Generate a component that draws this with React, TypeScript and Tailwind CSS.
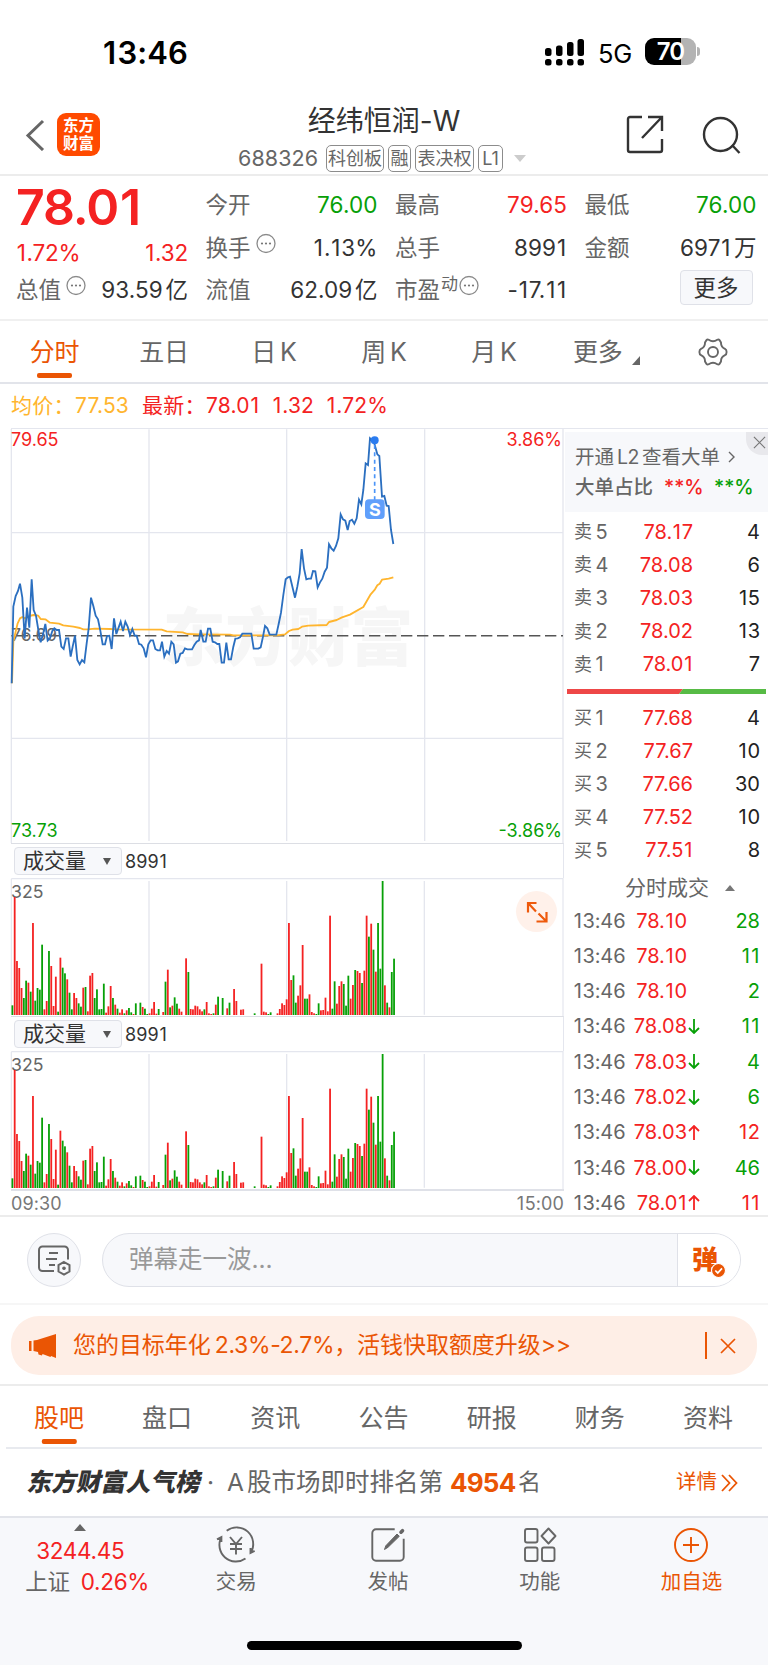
import type { ReactNode } from "react";

const RED = "#f42222";
const GREEN = "#07a007";

/* Minute bars: direction and top edge on a 122–523 scale; "-" is a minute without trades. */
const VOLUME =
  "g495 r170 r362 r383 r443 g473 g421 r427 g454 r248 g481 g443 g448 g313 r507 r482 g332 r377 r497 r409 g514 r352 g382 g399 r417 g457 g507 r458 r473 g489 g499 r442 g440 r513 r406 r398 g473 g447 g507 g506 g430 r517 r498 r437 g473 r493 g505 r517 r507 g519 r510 g503 g516 r521 g489 - g487 r500 g505 g521 r519 r505 r485 r520 g506 - r515 g424 r388 g501 r496 g471 g490 r505 r514 - r354 g395 r506 r507 r496 r498 r507 r513 g507 r485 r519 r521 g519 r493 g469 - g473 - r504 g487 - r446 r482 - r508 r507 - - - - g519 - - r370 r514 r516 g521 g516 - - r519 r506 r489 r494 r477 r248 r419 g405 g487 r466 r435 r314 g475 g475 r462 r515 r519 g521 g489 r510 r509 r472 r513 r226 g505 g423 r490 r437 r423 g431 g496 g406 r475 r434 g389 r392 r398 g428 r391 r226 g289 r250 g328 r394 g248 g385 g122 r435 g487 r501 g395 g355".split(
    " ",
  );

const PRICE =
  "35,775 40,545 47,513 54,498 60,476 67,518 74,640 81,548 88,608 95,463 101,555 108,572 115,615 122,652 129,628 136,597 143,647 150,640 157,618 163,610 170,615 177,615 184,665 191,672 198,640 205,640 212,695 218,665 225,632 232,705 239,718 246,705 253,712 260,655 266,610 273,518 280,543 287,572 294,583 301,617 308,658 315,658 321,633 328,632 335,672 342,580 349,627 356,607 362,590 369,618 376,590 383,605 390,630 397,612 404,632 410,632 417,657 424,659 431,670 438,697 445,658 452,646 459,646 466,672 473,676 480,676 486,650 493,695 500,678 507,686 514,650 521,658 528,713 534,709 541,686 548,684 555,670 562,673 576,673 583,660 590,650 597,646 602,615 610,650 617,650 624,611 631,611 638,650 645,652 652,657 658,657 665,713 672,713 679,653 686,703 693,703 700,665 706,641 713,640 720,637 727,626 754,626 761,671 775,671 782,667 789,635 795,603 802,610 809,629 829,629 836,597 843,563 850,510 857,463 864,457 870,455 885,518 892,485 899,445 905,372 912,430 919,463 926,461 933,461 939,438 946,439 953,487 960,472 967,461 974,440 981,428 987,358 994,370 1001,377 1008,363 1015,340 1022,268 1029,283 1036,287 1043,315 1049,288 1056,284 1063,296 1070,280 1077,224 1084,238 1090,195 1097,115 1104,120 1110,40 1122,52 1132,88 1138,93 1146,215 1153,213 1160,242 1166,243 1173,315 1180,357";

const AVERAGE =
  "36,775 40,650 47,620 53,595 60,580 67,576 74,580 88,573 101,570 115,572 122,582 136,583 150,593 177,596 190,601 220,605 240,609 250,613 262,613 285,611 330,612 350,613 485,614 500,619 548,622 562,627 600,628 690,629 700,631 830,631 855,628 867,618 878,614 895,612 906,605 925,602 980,600 987,591 1010,585 1026,577 1050,569 1090,546 1112,508 1125,493 1132,481 1139,476 1146,464 1166,461 1180,457";

/* A number whose narrow 1s get a little extra room. */
function Num({ children }: { children: string }) {
  return (
    <span>
      {children.split(/(1)/).map((part, i) => (part === "1" ? <span key={i} className="px-[0.035em]">1</span> : part))}
    </span>
  );
}

function More() {
  return (
    <svg viewBox="0 0 20 20" className="size-[20px] -translate-y-[4.5px]" fill="none" stroke="#8a8a8a">
      <circle cx="10" cy="10" r="9" strokeWidth="1.3" />
      <g fill="#777" stroke="none">
        <circle cx="6" cy="10" r="1.1" />
        <circle cx="10" cy="10" r="1.1" />
        <circle cx="14" cy="10" r="1.1" />
      </g>
    </svg>
  );
}

function Quote({ label, value, unit, tone = "text-[#333]" }: { label: ReactNode; value: string; unit?: string; tone?: string }) {
  return (
    <div className="flex h-[42.5px] items-center justify-between">
      <span className="flex items-center text-[#666]">{label}</span>
      <span className={tone + " tracking-[0.1px]"}>
        <Num>{value}</Num>
        {unit && <span className="ml-[2.5px]">{unit}</span>}
      </span>
    </div>
  );
}

function StatusBar() {
  return (
    <div className="flex h-[95px] items-start pt-[33px] pl-[102px] text-black">
      <div className="w-[443px] text-[31px] leading-[40px] font-semibold tracking-[0.1px]"><Num>13:46</Num></div>
      <svg viewBox="0 0 40 27" className="mt-[5.5px] h-[27px] w-[40px]">
        <rect x="0" y="9" width="6.500" height="8" rx="2.5" />
        <rect x="11" y="6.500" width="6.500" height="10.500" rx="2.5" />
        <rect x="22" y="3" width="6.500" height="14" rx="2.5" />
        <rect x="32.5" y="0" width="6.500" height="17" rx="2.5" />
        <rect x="0" y="20" width="6.500" height="6.5" rx="2.5" />
        <rect x="11" y="20" width="6.500" height="6.5" rx="2.5" />
        <rect x="22" y="20" width="6.500" height="6.5" rx="2.5" />
        <rect x="32.5" y="20" width="6.500" height="6.5" rx="2.5" />
      </svg>
      <div className="ml-[13px] w-[47px] text-[25.500px] leading-[41px] tracking-[-0.2px]">5G</div>
      <div className="mt-[5px] flex h-[27px] w-[51px] items-center justify-center rounded-[9px] bg-[linear-gradient(90deg,#000_0_36px,#b3b3b3_36px)] text-[24px] font-semibold tracking-[-0.8px] text-white">
        70
      </div>
      <div className="mt-[14px] ml-[1px] h-[9px] w-[3px] rounded-r-full bg-[#b3b3b3]" />
    </div>
  );
}

function Tag({ children, w }: { children: ReactNode; w: string }) {
  return (
    <span className={w + " flex h-[27px] items-center justify-center rounded-[5px] border-[1.5px] border-[#8c8c8c] text-[18px] whitespace-nowrap text-[#666]"}>
      {children}
    </span>
  );
}

function Header() {
  return (
    <div className="flex h-[81px] border-b-2 border-[#ececec]">
      <div className="flex w-[226px] pt-[18px] pl-[25px]">
        <svg viewBox="0 0 20 32" className="mt-[6px] h-[32px] w-[20px]" fill="none" stroke="#666" strokeWidth="3">
          <path d="M18 2 3 16.5 18 31" />
        </svg>
        <div className="ml-[12px] flex size-[43px] flex-col items-center justify-center rounded-[9px] bg-[#ff4a00] text-[15.500px] leading-[18px] font-bold text-white">
          <span>东方</span>
          <span>财富</span>
        </div>
      </div>
      <div className="w-[316px] text-center">
        <div className="h-[49px] pt-[5px] text-[28px] leading-[42px] text-[#333]">经纬恒润-W</div>
        <div className="flex items-center pt-[0.500px] pl-[12px]">
          <span className="w-[88px] text-left text-[21.5px] leading-[27px] tracking-[0.1px] text-[#666]">688326</span>
          <div className="flex gap-[4px]">
            <Tag w="w-[58px]">科创板</Tag>
            <Tag w="w-[23px]">融</Tag>
            <Tag w="w-[59px]">表决权</Tag>
            <Tag w="w-[25px]">L1</Tag>
          </div>
          <svg viewBox="0 0 12 7" className="ml-[11px] h-[7px] w-[12px]">
            <path d="M0 0h12L6 7z" fill="#ccc" />
          </svg>
        </div>
      </div>
      <svg viewBox="0 0 38 39" className="mt-[20px] ml-[84px] h-[39px] w-[38px]" fill="none" stroke="#333" strokeWidth="2.4">
        <path d="M16 2H4a2 2 0 0 0-2 2v31a2 2 0 0 0 2 2h30a2 2 0 0 0 2-2V24M22 2h14v14M36 2 16 23" />
      </svg>
      <svg viewBox="0 0 39 39" className="mt-[21px] ml-[38px] size-[39px]" fill="none" stroke="#333" strokeWidth="2.4">
        <circle cx="18.5" cy="18.5" r="16.5" />
        <path d="m30 29 7.5 8" />
      </svg>
    </div>
  );
}

function Quotes() {
  return (
    <div className="flex h-[145px] gap-[17.5px] border-b-2 border-[#f0f0f0] pt-[8px] pr-[12px] pl-[16px] text-[22.5px] whitespace-nowrap">
      <div className="w-[172px] shrink-0">
        <div className="h-[52px] text-[50px] leading-[47px] font-semibold tracking-[-1.1px] text-[#f42222]"><Num>78.01</Num></div>
        <div className="flex h-[33px] items-center justify-between pt-[1px] tracking-[-0.2px] text-[#f42222]">
          <Num>1.72%</Num>
          <Num>1.32</Num>
        </div>
        <Quote label={<>总值<i className="w-[5px]" /><More /></>} value="93.59" unit="亿" />
      </div>
      <div className="w-[172px] shrink-0">
        <Quote label="今开" value="76.00" tone="text-[#07a007]" />
        <Quote label={<>换手<i className="w-[5px]" /><More /></>} value="1.13%" />
        <Quote label="流值" value="62.09" unit="亿" />
      </div>
      <div className="w-[172px] shrink-0">
        <Quote label="最高" value="79.65" tone="text-[#f42222]" />
        <Quote label="总手" value="8991" />
        <Quote label={<>市盈<span className="-translate-y-[6px] pl-[1px] text-[17px]">动</span><i className="w-[1px]" /><More /></>} value="-17.11" />
      </div>
      <div className="w-[172px] shrink-0">
        <Quote label="最低" value="76.00" tone="text-[#07a007]" />
        <Quote label="金额" value="6971" unit="万" />
        <div className="flex justify-end pt-[1px] pr-[4px]">
          <div className="flex h-[35px] w-[73px] items-center justify-center rounded-[4px] border-[1.5px] border-[#dfe1e8] bg-[#f7f8fb] text-[#333]">更多</div>
        </div>
      </div>
    </div>
  );
}

function ChartTabs() {
  const tabs = ["五日", "日", "周", "月"];
  return (
    <div className="flex h-[63px] border-b-2 border-[#e2e4ea] text-[25px] leading-[62px] tracking-[-0.2px] text-[#666]">
      <div className="flex w-[109px] flex-col items-center text-[#ea5504]">
        <span className="h-[52px]">分时</span>
        <span className="h-[5px] w-[35px] rounded-[2px] bg-[#ea5504]" />
      </div>
      {tabs.map((t) => (
        <div key={t} className="w-[110px] text-center">
          {t}
          {t.length === 1 && <span className="ml-[4px]">K</span>}
        </div>
      ))}
      <div className="flex w-[109px] pl-[24px]">
        更多
        <svg viewBox="0 0 8 9" className="mt-[35px] ml-[9px] h-[9px] w-[8px]">
          <path d="M8 0v9H0z" fill="#666" />
        </svg>
      </div>
      <svg viewBox="0 0 30 28" className="mt-[17px] ml-[40px] h-[28px] w-[30px]" fill="none" stroke="#666" strokeWidth="1.9" strokeLinejoin="round">
        <path d="M8.4 2.2Q9.4 1 10.7 1.8C13.3 3.5 16.7 3.5 19.3 1.8Q20.6 1 21.6 2.2L23 4.6C22.9 7.5 24.4 9.6 27 10.8Q28.6 11.5 28.6 14T27 17.2C24.4 18.4 22.9 20.5 23 23.4L21.6 25.8Q20.6 27 19.3 26.2C16.7 24.5 13.3 24.5 10.7 26.2Q9.4 27 8.4 25.8L7 23.4C7.100 20.5 5.600 18.4 3 17.2Q1.400 16.5 1.400 14T3 10.800C5.600 9.600 7.100 7.500 7 4.600Z" />
        <circle cx="15" cy="14" r="5" />
      </svg>
    </div>
  );
}

function PriceChart() {
  return (
    <div className="relative h-[414px]">
      <svg viewBox="0 12 1692 1242" className="block h-[414px] w-[564px]" fill="none">
        <text x="488" y="704" fontSize="188" fontWeight="900" fill="#f6f6f6">东方财富</text>
        <g stroke="#e4e6ee" strokeWidth="4">
          <path d="M34 10V1254M34 323H1689M34 940H1689M447 13V1248M860 13V1248M1274 13V1248M1689 9V1254" />
        </g>
        <path d="M34 632H1689" stroke="#555" strokeWidth="4.500" strokeDasharray="34 14" strokeDashoffset="31" />
        <text x="34" y="648" fontSize="52" fill="#666">76.69</text>
        <polyline points={AVERAGE} stroke="#ffb52e" strokeWidth="5.500" strokeLinejoin="round" />
        <polyline points={PRICE} stroke="#2b6fc0" strokeWidth="5.500" />
        <path d="M1124 60V225" stroke="#4a94f8" strokeWidth="5" strokeDasharray="12 10" />
        <circle cx="1124" cy="46" r="12" fill="#2b7cf0" />
        <rect x="1095" y="223" width="59" height="59" rx="12" fill="#609ffb" />
        <text x="1124.500" y="272" fontSize="54" fontWeight="700" textAnchor="middle" fill="#fff">S</text>
      </svg>
      <div className="absolute inset-0 flex flex-col justify-between text-[18px] leading-[21px]">
        <div className="flex justify-between pr-[2px] pl-[11px] text-[#f42222]"><span>79.65</span><span>3.86%</span></div>
        <div className="flex justify-between pr-[2px] pb-[2px] pl-[11px] text-[#07a007]"><span>73.73</span><span>-3.86%</span></div>
      </div>
    </div>
  );
}

function VolumePane({ expand }: { expand?: boolean }) {
  return (
    <>
      <div className="ml-[11px] flex h-[35px] w-[553px] items-center border-t-[1.500px] border-r border-t-[#dcdee4] border-r-[#e4e6ee] pl-[3px] text-[#333]">
        <div className="flex h-[28px] w-[108px] items-center rounded-[4px] border-[1.5px] border-[#dfe1e8] bg-[#f7f8fb] pl-[8px] text-[21px]">
          成交量
          <svg viewBox="0 0 8 7" className="ml-[17px] h-[7px] w-[8px]"><path d="M0 0h8L4 7z" fill="#555" /></svg>
        </div>
        <span className="ml-[3px] text-[18px] tracking-[0.1px]"><Num>8991</Num></span>
      </div>
      <div className="relative h-[138px]">
        <svg viewBox="0 113 1692 414" className="block h-[138px] w-[564px]" fill="none">
          <path d="M34 115H1689M34 115V523M1689 113V527" stroke="#e4e6ee" strokeWidth="3.500" />
          <path d="M447 122V523M860 122V523M1273 122V523" stroke="#e4e6ee" strokeWidth="4" />
          <text x="33" y="174" fontSize="53" fill="#666">325</text>
          {VOLUME.map((v, i) => {
            if (v === "-") return null;
            const top = Number(v.slice(1));
            return <rect key={i} x={34.5 + i * 6.856} y={top} width="5.400" height={524 - top} fill={v[0] === "r" ? RED : GREEN} />;
          })}
        </svg>
        {expand && (
          <div className="absolute top-[13px] left-[516px] flex size-[41px] items-center justify-center rounded-full bg-[#fff1ea]">
            <svg viewBox="0 0 22 22" className="size-[22px]" fill="none" stroke="#ee5a0c" strokeWidth="2.200">
              <path d="M10.500 2H2v9.500M2 2l8 8.500M20.500 11v9.500h-10M20 20l-7.500-7.500" />
            </svg>
          </div>
        )}
      </div>
    </>
  );
}

const SELL = [["卖", "5", "78.17", "4"], ["卖", "4", "78.08", "6"], ["卖", "3", "78.03", "15"], ["卖", "2", "78.02", "13"], ["卖", "1", "78.01", "7"]];
const BUY = [["买", "1", "77.68", "4"], ["买", "2", "77.67", "10"], ["买", "3", "77.66", "30"], ["买", "4", "77.52", "10"], ["买", "5", "77.51", "8"]];
const TICKS = [["78.10", "", "28", "g"], ["78.10", "", "11", "g"], ["78.10", "", "2", "g"], ["78.08", "d", "11", "g"], ["78.03", "d", "4", "g"], ["78.02", "d", "6", "g"], ["78.03", "u", "12", "r"], ["78.00", "d", "46", "g"], ["78.01", "u", "11", "r"]];

function Depth({ rows }: { rows: string[][] }) {
  return (
    <div className="pr-[8px] pl-[10px]">
      {rows.map(([side, n, p, q]) => (
        <div key={n} className="flex h-[33.2px] items-center">
          <span className="w-[21.500px] text-[18px] text-[#666]">{side}</span>
          <span className="w-[28.500px] text-[#666]">{n}</span>
          <span className="w-[69px] text-right text-[#f42222]"><Num>{p}</Num></span>
          <span className="flex-1 text-right text-[#222]"><Num>{q}</Num></span>
        </div>
      ))}
    </div>
  );
}

function SidePanel() {
  return (
    <div className="relative w-[204px] pt-[4px] text-[20px] whitespace-nowrap">
      <div className="ml-[1px] h-[80px] bg-[#f7f8fb] pt-[10px] pl-[10px] text-[19.5px] leading-[30px] text-[#666]">
        <div className="flex items-center">
          开通<span className="px-[3px] tracking-[-0.5px]">L2</span>查看大单
          <svg viewBox="0 0 7 12" className="ml-[8px] h-[12px] w-[7px]" fill="none" stroke="#666" strokeWidth="1.400"><path d="m1 1 5 5-5 5" /></svg>
        </div>
        <div className="flex font-medium">
          <span className="w-[89px]">大单占比</span>
          <span className="w-[50px] text-[#f42222]">**%</span>
          <span className="text-[#07a007]">**%</span>
        </div>
      </div>
      <div className="absolute top-[4px] right-0 flex h-[23px] w-[22px] items-center justify-end rounded-bl-[16px] bg-[#e8e8ec] pr-[2px] pb-[3px]">
        <svg viewBox="0 0 14 14" className="size-[13px]" stroke="#777" strokeWidth="1.300"><path d="m1 1 12 12M13 1 1 13" /></svg>
      </div>
      <div className="pt-[3px]"><Depth rows={SELL} /></div>
      <svg viewBox="0 0 199 5" className="mt-[8px] ml-[3px] block h-[5px] w-[199px]">
        <path d="M0 0h116l-4 5H0z" fill="#ee4747" />
        <path d="M116 0h83v5h-87z" fill="#57bb45" />
      </svg>
      <div className="pt-[7px]"><Depth rows={BUY} /></div>
      <div className="flex h-[36px] items-center pt-[6px] pl-[61px] text-[21px] text-[#666]">
        分时成交
        <svg viewBox="0 0 10 6" className="ml-[16px] h-[6px] w-[10px]"><path d="M0 6h10L5 0z" fill="#777" /></svg>
      </div>
      <div className="pr-[8px] pl-[9px]">
        {TICKS.map(([p, d, q, c], i) => (
          <div key={i} className="flex h-[35.3px] items-center">
            <span className="w-[54px] tracking-[-0.100px] text-[#666]"><Num>13:46</Num></span>
            <span className="w-[60px] text-right text-[#f42222]"><Num>{p}</Num></span>
            <svg viewBox="0 0 12 15" className="ml-[1px] h-[15px] w-[12px]" fill="none" stroke={d === "u" ? RED : GREEN} strokeWidth="1.800">
              {d === "d" && <path d="M6 0v14M1 9l5 5 5-5" />}
              {d === "u" && <path d="M6 15V1M1 6l5-5 5 5" />}
            </svg>
            <span className={(c === "r" ? "text-[#f42222]" : "text-[#07a007]") + " flex-1 text-right"}><Num>{q}</Num></span>
          </div>
        ))}
      </div>
    </div>
  );
}

function Danmu() {
  return (
    <div className="flex h-[90px] border-t-2 border-b-2 border-t-[#ececec] border-b-[#f6f6f6] pt-[16px] pl-[27px]">
      <div className="flex size-[54px] items-center justify-center rounded-full border-[1.500px] border-[#dfe1e8] bg-[#f7f8fb]">
        <svg viewBox="0 0 34 31" className="h-[31px] w-[34px]" fill="none" stroke="#666" strokeWidth="2">
          <path d="M17 26H5.500A3.500 3.500 0 0 1 2 22.500V5a3.500 3.500 0 0 1 3.500-3.500h22A3.500 3.500 0 0 1 31 5v9.500M12 8h9M9 14h11M12 20h6" />
          <path d="m27 17 5.500 3.200v6.300L27 29.700l-5.500-3.200v-6.300z" />
          <circle cx="27" cy="23.300" r="1.300" fill="#666" stroke="none" />
          <circle cx="27" cy="23.300" r=".8" />
        </svg>
      </div>
      <div className="ml-[21px] flex h-[54px] w-[639px] overflow-hidden rounded-full border-[1.500px] border-[#dfe1e8] bg-[#f7f8fb]">
        <div className="w-[575px] border-r-[1.500px] border-[#dfe1e8] pl-[26px] text-[24.500px] leading-[50px] text-[#999]">弹幕走一波...</div>
        <div className="relative flex-1 bg-white pl-[14px] text-[26px] leading-[51px] font-black text-[#ea5504]">
          弹
          <svg viewBox="0 0 14 14" className="absolute top-[28.500px] left-[33px] size-[15px]">
            <circle cx="7" cy="7" r="6.500" fill="#ea5504" stroke="#fff" />
            <path d="m4 7 2.300 2.300L10.300 5" fill="none" stroke="#fff" strokeWidth="1.600" />
          </svg>
        </div>
      </div>
    </div>
  );
}

function Banner() {
  return (
    <div className="h-[81px] border-b-2 border-[#ececec] px-[11px] pt-[11px]">
      <div className="flex h-[59px] items-center rounded-[28px] bg-[#feeee6] text-[23px] text-[#ea5504]">
        <svg viewBox="0 0 27 24" className="ml-[18px] h-[24px] w-[27px]" fill="#ea5504">
          <path d="M0 7h2.500v10H0zM4.500 6.500 8 6 27 0v24l-5-2-.5 1-8-3-.5 1.500-3.500-1-.5-2.500-4.500-1z" />
        </svg>
        <span className="ml-[17px] w-[632px] tracking-[-0.050px] whitespace-nowrap">您的目标年化<i className="inline-block w-[4px]" /><span className="tracking-[-0.35px]">2.3%-2.7%</span>，活钱快取额度升级&gt;&gt;</span>
        <span className="h-[27px] w-[1.500px] bg-[#ea5504]" />
        <svg viewBox="0 0 16 16" className="ml-[13px] size-[16px]" stroke="#ea5504" strokeWidth="1.700"><path d="m1 1 14 14M15 1 1 15" /></svg>
      </div>
    </div>
  );
}

function InfoTabs() {
  return (
    <div className="mx-[6px] flex h-[63px] border-b-2 border-[#e8eaef] text-[25px] leading-[65px] text-[#666]">
      {["股吧", "盘口", "资讯", "公告", "研报", "财务", "资料"].map((t, i) => (
        <div key={t} className={(i === 0 ? "text-[#ea5504]" : "") + " flex w-[108.200px] shrink-0 -translate-x-[1.200px] flex-col items-center"}>
          <span className="h-[53px]">{t}</span>
          {i === 0 && <span className="h-[5px] w-[35px] shrink-0 rounded-[2px] bg-[#ea5504]" />}
        </div>
      ))}
    </div>
  );
}

function Rank() {
  return (
    <div className="flex h-[67px] items-center pl-[28px] text-[24.500px] whitespace-nowrap text-[#666]">
      <span className="w-[177px] -skew-x-12 text-[24.800px] font-black text-[#333]">东方财富人气榜</span>
      <span className="w-[22px] pl-[2px]">·</span>
      <span className="w-[223px]">A<i className="inline-block w-[3px]" />股市场即时排名第</span>
      <span className="w-[68px] text-[26px] font-bold tracking-[-0.8px] text-[#ea5504]">4954</span>
      <span className="w-[158px] text-[23px]">名</span>
      <span className="text-[20.500px] text-[#ea5504]">详情</span>
      <svg viewBox="0 0 17 18" className="ml-[4px] h-[18px] w-[17px]" fill="none" stroke="#ea5504" strokeWidth="1.800"><path d="m1 1 7.500 8L1 17M8 1l7.500 8L8 17" /></svg>
    </div>
  );
}

function Action({ label, children }: { label: string; children: ReactNode }) {
  return (
    <div className="flex w-[151.700px] flex-col items-center pt-[9px] text-[20.500px] leading-[30px]">
      <svg viewBox="0 0 38 36" className="mb-[4px] h-[36px] w-[38px] overflow-visible" fill="none" stroke="currentColor" strokeWidth="1.900">{children}</svg>
      {label}
    </div>
  );
}

function BottomBar() {
  return (
    <div className="h-[149px] border-t-2 border-[#e2e4ea] bg-[#f7f8fb] text-[#666]">
      <div className="flex h-[108px]">
        <div className="flex w-[160.500px] flex-col items-center pt-[6px] text-[22.500px] leading-[31px] tracking-[-0.3px]">
          <svg viewBox="0 0 12 7" className="mb-[4px] h-[7px] w-[12px]"><path d="M0 7h12L6 0z" fill="#666" /></svg>
          <span className="text-[#f42222]">3244.45</span>
          <span className="flex pl-[14px]">上证<span className="ml-[11px] text-[#f42222]">0.26%</span></span>
        </div>
        <Action label="交易">
          <path d="M9.700 3.800A16.500 16.500 0 0 1 33.800 25.500M37.600 23.800 33.500 26V21M28.500 31.400A16.500 16.500 0 0 1 4.300 10.300M0 12.400 4.400 10V15M13 10l6 7 6-7M13 17h12M13 22h12M19 17v10.500" />
        </Action>
        <Action label="发帖">
          <path d="M25.700 2.300H7a3.700 3.700 0 0 0-3.700 3.700v24a3.700 3.700 0 0 0 3.700 3.700h24a3.700 3.700 0 0 0 3.700-3.700V11.700" />
          <path d="m15.500 22.500 3.500-2.200L30.300 9.300 28 7 16.800 18.800z" fill="currentColor" strokeWidth="1" />
          <path d="m32 5.200 1.500-1.500" strokeWidth="3.600" strokeLinecap="round" />
        </Action>
        <Action label="功能">
          <rect x="4" y="2" width="12.500" height="13.500" rx="2" />
          <rect x="4" y="20.500" width="12.500" height="13.500" rx="2" />
          <rect x="21" y="20.500" width="12.500" height="13.500" rx="2" />
          <path d="m27.500 1.500 7 7.500-7 7.500-7-7.500z" strokeLinejoin="round" />
        </Action>
        <div className="text-[#ea5504]">
          <Action label="加自选">
            <circle cx="19" cy="18" r="16" />
            <path d="M19 10v16M11 18h16" />
          </Action>
        </div>
      </div>
      <div className="mx-auto mt-[14.500px] h-[9px] w-[275px] rounded-full bg-black" />
    </div>
  );
}

export default function App() {
  return (
    <div className="h-[1665px] w-[768px] overflow-hidden bg-white font-['Inter','Noto_Sans_CJK_SC',sans-serif]">
      <StatusBar />
      <Header />
      <Quotes />
      <ChartTabs />
      <div className="flex h-[44px] items-center pl-[11px] text-[21px] tracking-[0.200px] whitespace-nowrap text-[#f42222]">
        <span className="w-[64px] text-[#ffb52e]">均价：</span>
        <span className="w-[67px] text-[#ffb52e]">77.53</span>
        <span className="w-[64px]">最新：</span>
        <span className="w-[66px]"><Num>78.01</Num></span>
        <span className="w-[54px]"><Num>1.32</Num></span>
        <Num>1.72%</Num>
      </div>
      <div className="flex h-[787px]">
        <div className="w-[564px]">
          <div className="ml-[11px] h-[1px] w-[757px] bg-[#e4e6ee]" />
          <PriceChart />
          <VolumePane expand />
          <VolumePane />
          <div className="ml-[11px] flex h-[25px] items-center justify-between border-t-2 border-[#dfe1e8] pt-[2px] text-[18px] tracking-[0.1px] text-[#777]">
            <span>09:30</span>
            <Num>15:00</Num>
          </div>
        </div>
        <SidePanel />
      </div>
      <Danmu />
      <Banner />
      <InfoTabs />
      <Rank />
      <BottomBar />
    </div>
  );
}
